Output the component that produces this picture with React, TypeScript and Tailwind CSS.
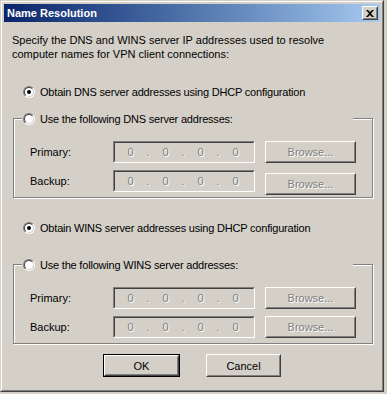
import React from "react";

const font = { fontFamily: '"Liberation Sans", Arial, sans-serif' };

const Radio = ({ checked }: { checked?: boolean }) => (
  <span className="flex h-[12px] w-[12px] shrink-0 rounded-full border border-t-[#808080] border-l-[#808080] border-b-white border-r-white">
    <span className="flex h-full w-full items-center justify-center rounded-full border border-t-[#404040] border-l-[#404040] border-b-[#d4d0c8] border-r-[#d4d0c8] bg-white">
      {checked && <span className="h-[4px] w-[4px] rounded-full bg-black" />}
    </span>
  </span>
);

const IpBox = () => (
  <div className="h-[22px] w-[142px] shrink-0 border border-t-[#808080] border-l-[#808080] border-b-white border-r-white">
    <div className="flex h-full w-full items-center border border-t-[#404040] border-l-[#404040] border-b-[#d4d0c8] border-r-[#d4d0c8] text-[#808080] [text-shadow:1px_1px_0_#fff]">
      <div className="-ml-[2px] flex items-center">
        {[0, 1, 2, 3].map((i) => (
          <React.Fragment key={i}>
            <span className="w-[35px] text-center">0</span>
            {i < 3 && <span className="flex w-0 justify-center">.</span>}
          </React.Fragment>
        ))}
      </div>
    </div>
  </div>
);

const Button = ({ label, disabled, isDefault, className = "" }: { label: string; disabled?: boolean; isDefault?: boolean; className?: string }) => (
  <div className={`shrink-0 ${isDefault ? "border border-black" : ""} ${className}`}>
    <div className="h-full w-full border border-t-white border-l-white border-b-[#404040] border-r-[#404040]">
      <div
        className={`flex h-full w-full items-center justify-center border border-t-[#d4d0c8] border-l-[#d4d0c8] border-b-[#808080] border-r-[#808080] ${
          disabled ? "text-[#808080] [text-shadow:1px_1px_0_#fff]" : "text-black"
        }`}
      >
        {label}
      </div>
    </div>
  </div>
);

const AddrRow = ({ label, browseOffset = false, first = false }: { label: string; browseOffset?: boolean; first?: boolean }) => (
  <div className={`flex items-start pl-[16px] ${first ? "mt-[15px]" : "mt-[7px]"}`}>
    <span className="flex h-[22px] w-[83px] items-center">{label}</span>
    <IpBox />
    <Button label="Browse..." disabled className={`ml-[10px] h-[22px] w-[91px] ${browseOffset ? "mt-[3px]" : ""}`} />
  </div>
);

const Group = ({ title, dnsOffset }: { title: string; dnsOffset?: boolean }) => (
  <div className="ml-[9px] h-[80px] w-[360px] border border-[#808080] shadow-[inset_1px_1px_0_#fff,1px_1px_0_#fff]">
    <div className="-mt-[7px] ml-[8px] flex h-[14px] w-[331px] items-center bg-[#d4d0c8] pl-[1px]">
      <Radio />
      <span className="ml-[5px] tracking-[-0.2px]">{title}</span>
    </div>
    <AddrRow label="Primary:" first />
    <AddrRow label="Backup:" browseOffset={dnsOffset} />
  </div>
);

export default function App() {
  return (
    <div className="h-[394px] w-[387px] bg-[#d4d0c8] text-[11px] leading-[14px] text-black" style={font}>
      <div className="h-[392px] w-[384px] border border-t-[#d4d0c8] border-l-[#d4d0c8] border-b-[#404040] border-r-[#404040]">
        <div className="flex h-full w-full flex-col border border-t-white border-l-white border-b-[#808080] border-r-[#808080] p-[2px]">
          {/* title bar */}
          <div className="flex h-[18px] shrink-0 items-center justify-between bg-linear-to-r from-[#0a246a] to-[#a6caf0] pl-[3px] pr-[2px]">
            <span className="font-bold text-white">Name Resolution</span>
            <div className="h-[14px] w-[16px] border border-t-white border-l-white border-b-[#404040] border-r-[#404040] bg-[#d4d0c8]">
              <div className="flex h-full w-full items-center justify-center border border-t-[#d4d0c8] border-l-[#d4d0c8] border-b-[#808080] border-r-[#808080]">
                <svg width="8" height="7" viewBox="0 0 8 7">
                  <path d="M0 0h2l2 2 2-2h2L5 3.5 8 7H6L4 5 2 7H0l3-3.5z" fill="#000" />
                </svg>
              </div>
            </div>
          </div>

          {/* client */}
          <div className="flex flex-col">
            <p className="mt-[11px] pl-[8px]">
              Specify the DNS and WINS server IP addresses used to resolve
              <br />
              computer names for VPN client connections:
            </p>

            <div className="mt-[24px] flex h-[14px] items-center pl-[19px]">
              <Radio checked />
              <span className="ml-[5px] tracking-[-0.2px]">Obtain DNS server addresses using DHCP configuration</span>
            </div>

            <div className="mt-[19px]">
              <Group title="Use the following DNS server addresses:" dnsOffset />
            </div>

            <div className="mt-[23px] flex h-[14px] items-center pl-[19px]">
              <Radio checked />
              <span className="ml-[5px] tracking-[-0.2px]">Obtain WINS server addresses using DHCP configuration</span>
            </div>

            <div className="mt-[29px]">
              <Group title="Use the following WINS server addresses:" />
            </div>

            <div className="mt-[10px] flex justify-center gap-[26px]">
              <Button label="OK" isDefault className="h-[23px] w-[77px]" />
              <Button label="Cancel" className="h-[23px] w-[75px]" />
            </div>
          </div>
        </div>
      </div>
    </div>
  );
}
